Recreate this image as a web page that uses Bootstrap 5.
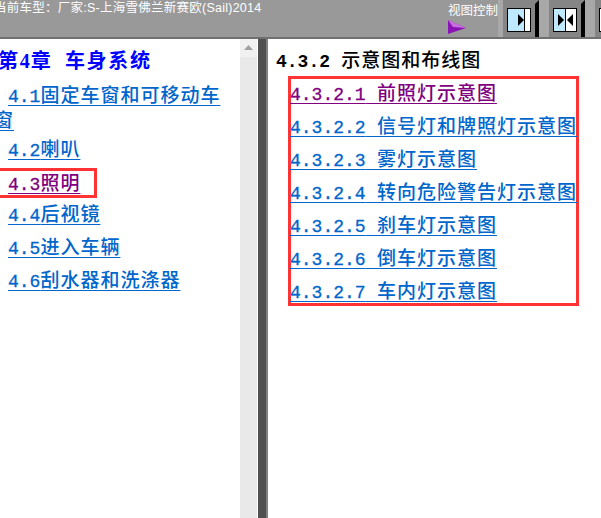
<!DOCTYPE html>
<html lang="zh">
<head>
<meta charset="utf-8">
<title>4.3.2 示意图和布线图</title>
<link rel="stylesheet" href="https://cdn.jsdelivr.net/npm/bootstrap@5.3.0/dist/css/bootstrap.min.css">
<style>
html,body{height:100%;overflow:hidden;background:#fff}
.frame{height:518px;width:601px;overflow:hidden}
.topbar{height:39px;flex:none;background:#999;border-bottom:2px solid #707070;overflow:hidden}
.cartext{font:12.5px/14px "Liberation Sans","Noto Sans CJK SC",sans-serif;color:#fff;margin:0 0 0 -6px;padding-top:1px;white-space:nowrap;letter-spacing:.25px;width:454px;flex:none}
.viewctl{width:50px;flex:none;color:#fff;font:12.5px/14px "Noto Sans CJK SC",sans-serif;padding-top:3px}
.viewctl svg{display:block;margin:3px 0 0 0}
.tbtns{flex:none;background:#a8a8a8;padding-left:5px;height:37px;gap:10px}
.tbtns svg{display:block;flex:none}
.panes{flex:1 1 auto;min-height:0}
.navpane{width:240px;flex:none;overflow:hidden;padding-top:9px}
.sbar{width:18px;flex:none;background:#e9e9e9;border-right:1px solid #fff}
.sbtn{height:18px;background:#f1f1f1}
.sbtn svg{display:block;margin:0 auto;padding-top:6px}
.gutter{width:10px;flex:none;background:#505050;border-right:2px solid #808080}
.mainpane{flex:1 1 auto;padding:8px 0 0 8px;min-width:0}
.cnfont{font-family:"Noto Sans CJK SC",serif;font-size:19px;font-weight:500;letter-spacing:1px}
.latin{font-family:"Liberation Mono",monospace;font-size:18px;letter-spacing:0;font-weight:400;-webkit-text-stroke:.3px}
.chap{margin:0 0 0 -2px;height:24px;color:#00f;line-height:24px;font-size:20px;font-weight:700;white-space:nowrap;letter-spacing:1.7px}
.chap .latin{font-family:"Liberation Serif",serif;font-size:20px;font-weight:700;letter-spacing:1px;-webkit-text-stroke:0}
.navlist{margin:11px 5px 0 -6px;padding:0;list-style:none;line-height:24px}
.navlist li{height:33px;text-indent:14px}
.navlist li.wrapitem{height:53px;line-height:22px}
.lnk{color:#06c;text-underline-offset:3px;text-decoration-thickness:1px}
.lnk.seen{color:#800080}
.marked{display:block;width:103px;margin-top:-1px;border:3px solid #f33;padding:0 0 0 11px;height:30px;line-height:21px;text-indent:0}
.heading{margin:0;height:24px;line-height:24px;color:#000;font-weight:500;white-space:nowrap;font-size:19px;word-spacing:6px}
.heading .latin{font-weight:700;-webkit-text-stroke:0}
.figbox{border:3px solid #f33;width:291px;height:230px;margin:5px 0 0 12px;padding:1px 0 0 0;list-style:none;word-spacing:6px}
.figbox li{height:33px;line-height:24px;white-space:nowrap;margin-left:-1px}
</style>
</head>
<body>
<div class="frame d-flex flex-column">
  <header class="topbar d-flex">
    <p class="cartext">当前车型：厂家:S-上海雪佛兰新赛欧(Sail)2014</p>
    <div class="viewctl text-nowrap">视图控制
      <svg width="20" height="14" viewBox="0 0 20 14"><polygon points="0,0 18,8 0,14" fill="#8a14b4"/><polygon points="0,0 18,8 5,7" fill="#c870e0"/></svg>
    </div>
    <div class="tbtns d-flex">
      <svg width="36" height="37" viewBox="0 0 36 37"><rect width="36" height="37" fill="#858585"/><polygon points="36,0 36,37 32,37 32,4" fill="#000"/><rect x="4.5" y="8.5" width="23" height="23" fill="#bfe9ff" stroke="#000"/><rect x="22" y="9" width="5" height="22" fill="#fff"/><line x1="21.5" y1="9" x2="21.5" y2="31" stroke="#000"/><polygon points="15,14 21,20 15,26" fill="#000"/></svg>
      <svg width="36" height="37" viewBox="0 0 36 37"><rect width="36" height="37" fill="#858585"/><polygon points="36,0 36,37 32,37 32,4" fill="#000"/><rect x="4.5" y="8.5" width="23" height="23" fill="#bfe9ff" stroke="#000"/><rect x="16" y="9" width="11" height="22" fill="#fff"/><line x1="16.5" y1="9" x2="16.5" y2="31" stroke="#000"/><polygon points="9,14 15,20 9,26" fill="#000"/><polygon points="24,14 18,20 24,26" fill="#000"/></svg>
      <svg width="36" height="37" viewBox="0 0 36 37"><rect width="36" height="37" fill="#858585"/><rect x="4.5" y="8.5" width="23" height="23" fill="#fff" stroke="#000"/><line x1="9.5" y1="9" x2="9.5" y2="31" stroke="#000"/><polygon points="17,14 11,20 17,26" fill="#000"/></svg>
    </div>
  </header>
  <div class="panes d-flex">
    <nav class="navpane cnfont">
      <h1 class="chap">第<span class="latin">4</span>章&nbsp; 车身系统</h1>
      <ul class="navlist">
        <li class="wrapitem"><a class="lnk" href="#"><span class="latin">4.1</span>固定车窗和可移动车窗</a></li>
        <li><a class="lnk" href="#"><span class="latin">4.2</span>喇叭</a></li>
        <li><span class="marked"><a class="lnk seen" href="#"><span class="latin">4.3</span>照明</a></span></li>
        <li><a class="lnk" href="#"><span class="latin">4.4</span>后视镜</a></li>
        <li><a class="lnk" href="#"><span class="latin">4.5</span>进入车辆</a></li>
        <li><a class="lnk" href="#"><span class="latin">4.6</span>刮水器和洗涤器</a></li>
      </ul>
    </nav>
    <div class="sbar"><div class="sbtn"><svg width="9" height="11" viewBox="0 0 9 5"><polygon points="0,5 4.5,0 9,5" fill="#a0a0a0"/></svg></div></div>
    <div class="gutter"></div>
    <main class="mainpane cnfont">
      <h2 class="heading"><span class="latin">4.3.2</span> 示意图和布线图</h2>
      <ul class="figbox">
        <li><a class="lnk seen" href="#"><span class="latin">4.3.2.1</span> 前照灯示意图</a></li>
        <li><a class="lnk" href="#"><span class="latin">4.3.2.2</span> 信号灯和牌照灯示意图</a></li>
        <li><a class="lnk" href="#"><span class="latin">4.3.2.3</span> 雾灯示意图</a></li>
        <li><a class="lnk" href="#"><span class="latin">4.3.2.4</span> 转向危险警告灯示意图</a></li>
        <li><a class="lnk" href="#"><span class="latin">4.3.2.5</span> 刹车灯示意图</a></li>
        <li><a class="lnk" href="#"><span class="latin">4.3.2.6</span> 倒车灯示意图</a></li>
        <li><a class="lnk" href="#"><span class="latin">4.3.2.7</span> 车内灯示意图</a></li>
      </ul>
    </main>
  </div>
</div>
<script src="https://cdn.jsdelivr.net/npm/bootstrap@5.3.0/dist/js/bootstrap.bundle.min.js"></script>
</body>
</html>
